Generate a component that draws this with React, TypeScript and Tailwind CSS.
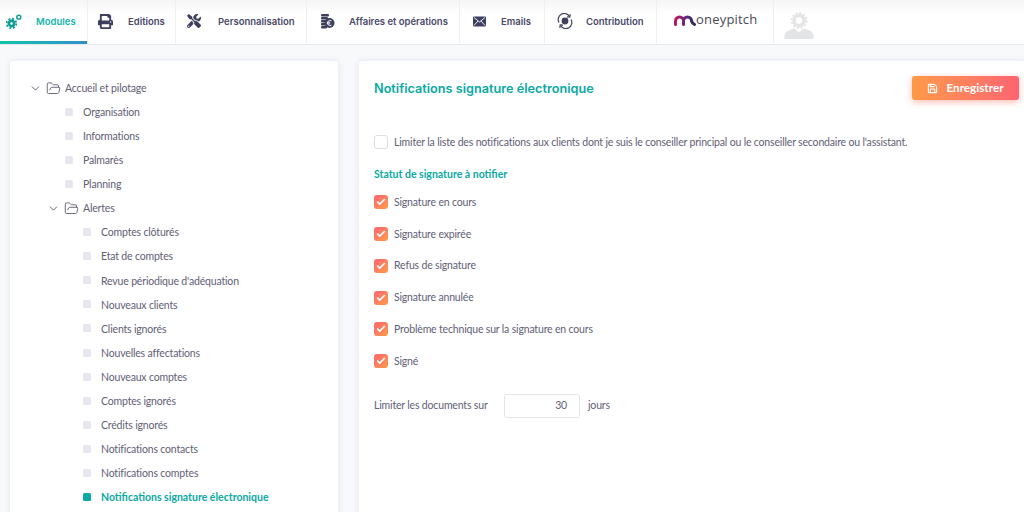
import { ChevronDown, FolderOpen, Check, Save } from 'lucide-react';
import { FaPrint, FaTools } from 'react-icons/fa';

const navFont = "[font-family:Inter,'Open_Sans',sans-serif]";

function GearsIcon() {
  return (
    <svg width="16" height="15" viewBox="0 0 16 15" fill="none" stroke="#0f9f98">
      <circle cx="5.500" cy="9.500" r="2.600" strokeWidth="2.600" />
      <circle cx="5.500" cy="9.500" r="4.800" strokeWidth="1.800" strokeDasharray="2 1.770" />
      <circle cx="12.800" cy="3.200" r="2" strokeWidth="1.500" />
    </svg>
  );
}

function CoinsIcon() {
  return (
    <svg width="15" height="16" viewBox="0 0 15 16" fill="#3e3f5e">
      <rect x="1" y="1" width="8" height="2.400" rx="1" />
      <rect x="1" y="4" width="7" height="2.400" rx="1" />
      <rect x="1" y="7" width="5" height="2.400" rx="1" />
      <rect x="1" y="10" width="5" height="2.400" rx="1" />
      <rect x="1" y="13" width="6" height="2.400" rx="1" />
      <circle cx="9.500" cy="10" r="5" />
      <path d="M11.500 7.800a2.600 2.600 0 1 0 0 4.400M6.800 9.300h3.400M6.800 10.800h3.400" fill="none" stroke="#fff" strokeWidth="0.900" />
    </svg>
  );
}

function MailIcon() {
  return (
    <svg width="13" height="11" viewBox="0 0 13 11">
      <rect width="13" height="10" y="0.500" rx="1" fill="#3e3f5e" />
      <path d="M1 1.500 6.500 6 12 1.500M1 9.500 5 5M12 9.500 8 5" fill="none" stroke="#fff" strokeWidth="0.900" />
    </svg>
  );
}

function ContributionIcon() {
  return (
    <svg width="16" height="16" viewBox="0 0 16 16" fill="none" stroke="#3e3f5e" strokeWidth="1.200">
      <circle cx="8" cy="8" r="2.800" fill="#3e3f5e" />
      <path d="M2 9.500A6 6 0 0 1 12.500 3.500M14 6.500A6 6 0 0 1 3.500 12.500" />
      <path d="M13.200 1.200 12.800 4 10 3.800M2.800 14.800 3.200 12 6 12.200" />
    </svg>
  );
}

function AvatarIcon() {
  return (
    <svg width="30" height="28" viewBox="0 0 30 28" fill="#e3e4e6">
      <circle cx="15" cy="8.500" r="5" fill="none" stroke="#e3e4e6" strokeWidth="3.400" />
      <circle cx="15" cy="8.500" r="7.500" fill="none" stroke="#e3e4e6" strokeWidth="1.800" strokeDasharray="2.200 1.730" />
      <path d="M0.500 27v-3c0-4 4-6 10-7.500l4.500 4 4.500-4c6 1.500 10 3.500 10 7.500v3z" />
    </svg>
  );
}

function Logo() {
  return (
    <div className="flex items-end">
      <svg width="22" height="11" viewBox="0 0 22 11" fill="none" strokeWidth="3" strokeLinecap="round">
        <defs>
          <linearGradient id="moneypitch-m" x1="0" x2="1" y1="0" y2="0">
            <stop offset="0" stopColor="#c2185b" />
            <stop offset="0.600" stopColor="#5b2a86" />
            <stop offset="1" stopColor="#2c2c54" />
          </linearGradient>
        </defs>
        <path d="M1.500 9.500V6a4 4 0 0 1 8 0v3.500M9.500 6a4 4 0 0 1 8 0c0 0 .8 2.500 3 3.500" stroke="url(#moneypitch-m)" />
      </svg>
      <span className="text-[13px] leading-[13px] tracking-[0.2px] text-[#4a4a55] [font-family:'Open_Sans',sans-serif]">oneypitch</span>
    </div>
  );
}

function NavItem({ icon, label, width, gap, active }: { icon: React.ReactNode; label: string; width: string; gap: string; active?: boolean }) {
  return (
    <div className={`relative flex h-full shrink-0 items-center border-r border-[#eeeff3] ${width} ${active ? 'text-[#14b5ab]' : 'text-[#494a68]'}`}>
      <div className={`flex w-[16px] justify-center pb-[2px] ${gap}`}>{icon}</div>
      <span className={`text-[9.500px] font-semibold ${navFont}`}>{label}</span>
      {active && <div className="absolute right-0 bottom-0 left-0 h-[3px] bg-gradient-to-r from-[#0fc4a9] to-[#2f8fc9]" />}
    </div>
  );
}

function TreeFolder({ label, indent }: { label: string; indent: string }) {
  return (
    <div className={`flex h-[24.060px] items-center ${indent}`}>
      <ChevronDown size={13} strokeWidth={1.600} className="mb-[2px] text-[#4a4b63]" />
      <FolderOpen size={15} strokeWidth={1.300} className="mb-[2px] ml-[4px] text-[#4a4b63]" />
      <span className="ml-[4px] tracking-[-0.170px] text-[#5f6076]">{label}</span>
    </div>
  );
}

function TreeLeaf({ label, indent, active }: { label: string; indent: string; active?: boolean }) {
  return (
    <div className={`flex h-[24.060px] items-center ${indent}`}>
      <div className={`mr-[10px] mb-[2px] h-[8px] w-[8px] shrink-0 rounded-[1.500px] ${active ? 'bg-[#0aa9a3]' : 'bg-[#e6e6ee]'}`} />
      <span className={active ? 'font-bold text-[#0aa9a3]' : 'tracking-[-0.170px] text-[#5f6076]'}>{label}</span>
    </div>
  );
}

function StatusRow({ label }: { label: string }) {
  return (
    <div className="flex h-[31.700px] items-center">
      <div className="flex h-[14px] w-[14px] items-center justify-center rounded-[3px] bg-gradient-to-br from-[#fd6470] to-[#fe9a46]">
        <Check size={10} strokeWidth={4} className="text-white" />
      </div>
      <span className="ml-[6px] pt-[1px] tracking-[-0.170px]">{label}</span>
    </div>
  );
}

const level1 = ['Organisation', 'Informations', 'Palmarès', 'Planning'];
const level2 = [
  'Comptes clôturés',
  'Etat de comptes',
  "Revue périodique d'adéquation",
  'Nouveaux clients',
  'Clients ignorés',
  'Nouvelles affectations',
  'Nouveaux comptes',
  'Comptes ignorés',
  'Crédits ignorés',
  'Notifications contacts',
  'Notifications comptes',
];
const statuses = [
  'Signature en cours',
  'Signature expirée',
  'Refus de signature',
  'Signature annulée',
  'Problème technique sur la signature en cours',
  'Signé',
];

export default function App() {
  return (
    <div className="flex h-[512px] w-[1024px] flex-col overflow-hidden bg-[#f8f9fb] text-[10.500px] [font-family:Lato,sans-serif]">
      <nav className="flex h-[45px] shrink-0 border-b border-[#e6e7ea] bg-gradient-to-b from-[#f5f5f5] to-white to-[30%]">
        <NavItem active icon={<GearsIcon />} label="Modules" width="w-[88px] pl-[6px]" gap="mr-[14px]" />
        <NavItem icon={<FaPrint size={15} className="text-[#3e3f5e]" />} label="Editions" width="w-[88px] pl-[9px]" gap="mr-[15px]" />
        <NavItem icon={<FaTools size={14} className="text-[#3e3f5e]" />} label="Personnalisation" width="w-[131px] pl-[10px]" gap="mr-[16px]" />
        <NavItem icon={<CoinsIcon />} label="Affaires et opérations" width="w-[153px] pl-[12px]" gap="mr-[14px]" />
        <NavItem icon={<MailIcon />} label="Emails" width="w-[85px] pl-[11px]" gap="mr-[14px]" />
        <NavItem icon={<ContributionIcon />} label="Contribution" width="w-[112px] pl-[12px]" gap="mr-[13px]" />
        <div className="flex h-full w-[117px] shrink-0 items-center border-r border-[#eeeff3] pb-[5px] pl-[17px]">
          <Logo />
        </div>
        <div className="flex h-full items-end pb-[4px] pl-[10px]">
          <AvatarIcon />
        </div>
      </nav>

      <main className="flex min-h-0 flex-1 gap-[21px] pt-[16px] pl-[10px]">
        <aside className="h-[480px] w-[328px] shrink-0 rounded-[3px] bg-white pt-[16px] pl-[19px] shadow-[0_0_6px_rgba(210,215,235,0.6)]">
          <TreeFolder label="Accueil et pilotage" indent="" />
          {level1.map((l) => (
            <TreeLeaf key={l} label={l} indent="pl-[36px]" />
          ))}
          <TreeFolder label="Alertes" indent="pl-[18px]" />
          {level2.map((l) => (
            <TreeLeaf key={l} label={l} indent="pl-[54px]" />
          ))}
          <TreeLeaf active label="Notifications signature électronique" indent="pl-[54px]" />
        </aside>

        <section className="h-[480px] flex-1 rounded-tl-[3px] bg-white pt-[15px] pr-[5px] pl-[15px] text-[#5f6076] shadow-[0_0_6px_rgba(210,215,235,0.6)]">
          <div className="flex h-[24px] items-center justify-between">
            <h1 className={`pt-[1px] text-[12.700px] font-semibold text-[#0aa9a3] ${navFont}`}>Notifications signature électronique</h1>
            <button className="flex h-[24px] w-[107px] items-center justify-center gap-[8px] rounded-[3px] bg-gradient-to-r from-[#fe9a46] to-[#fd6470] text-[11.700px] font-bold text-white shadow-[0_2px_6px_rgba(253,120,100,0.5)]">
              <Save size={11} strokeWidth={2.400} />
              Enregistrer
            </button>
          </div>

          <div className="mt-[35px] flex h-[14px] items-center">
            <div className="h-[14px] w-[14px] rounded-[3px] border border-[#dddee3] bg-white" />
            <span className="ml-[6px] pt-[1px] tracking-[-0.170px]">Limiter la liste des notifications aux clients dont je suis le conseiller principal ou le conseiller secondaire ou l'assistant.</span>
          </div>

          <h2 className="mt-[17px] h-[16px] font-bold leading-[16px] text-[#0aa9a3]">Statut de signature à notifier</h2>

          <div className="mt-[4.600px]">
            {statuses.map((s) => (
              <StatusRow key={s} label={s} />
            ))}
          </div>

          <div className="mt-[17.400px] flex h-[24px] items-center tracking-[-0.170px]">
            <span className="w-[130px]">Limiter les documents sur</span>
            <div className="flex h-[24px] w-[76px] items-center justify-end rounded-[3px] border border-[#e4e5ea] bg-white pr-[12px]">30</div>
            <span className="ml-[8px]">jours</span>
          </div>
        </section>
      </main>
    </div>
  );
}
